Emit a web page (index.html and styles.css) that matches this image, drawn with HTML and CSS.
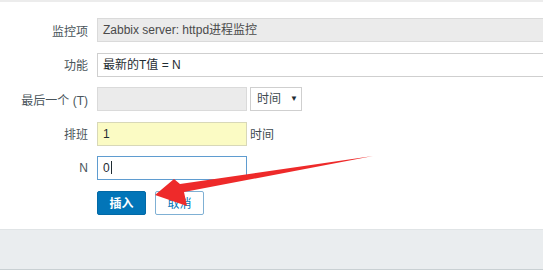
FILE: index.html
```html
<!DOCTYPE html>
<html lang="zh">
<head>
<meta charset="utf-8">
<title>功能</title>
<link rel="stylesheet" href="styles.css">
</head>
<body>
<div class="page">
  <form class="form">
    <div class="row">
      <label class="label">监控项</label>
      <div class="field"><div class="input input-wide input-readonly">Zabbix server: httpd进程监控</div></div>
    </div>
    <div class="row">
      <label class="label">功能</label>
      <div class="field"><div class="input input-wide">最新的T值 = N</div></div>
    </div>
    <div class="row">
      <label class="label">最后一个 (T)</label>
      <div class="field">
        <div class="input input-short input-readonly"></div>
        <div class="select">时间 <span class="caret">▼</span></div>
      </div>
    </div>
    <div class="row">
      <label class="label">排班</label>
      <div class="field">
        <div class="input input-short input-yellow">1</div>
        <span class="unit">时间</span>
      </div>
    </div>
    <div class="row">
      <label class="label">N</label>
      <div class="field"><div class="input input-short input-focus">0<span class="cursor"></span></div></div>
    </div>
    <div class="row">
      <span class="label"></span>
      <div class="field buttons">
        <button type="button" class="btn btn-primary">插入</button>
        <button type="button" class="btn btn-alt">取消</button>
      </div>
    </div>
  </form>
  <div class="footer"></div>
  <svg class="arrow" width="543" height="270" viewBox="0 0 543 270">
    <polygon points="155,195 174,179 180,184 373,156 184,192 187,206" fill="#ee2a2a"/>
  </svg>
</div>
</body>
</html>
```
FILE: styles.css
```css
html, body {
  margin: 0;
  padding: 0;
  background: #ffffff;
}
body {
  font-family: "Liberation Sans", Arial, "Noto Sans CJK SC", sans-serif;
  font-size: 12px;
  color: #1f2c33;
  overflow: hidden;
  width: 543px;
  height: 270px;
}
.page {
  position: relative;
  width: 543px;
  height: 270px;
  overflow: hidden;
}
.form {
  border-top: 2px solid #ececec;
  padding: 16px 0 14px 0;
  display: flex;
  flex-direction: column;
  gap: 10.5px;
}
.row {
  display: grid;
  grid-template-columns: 88px 1fr;
  column-gap: 9px;
  align-items: center;
  height: 24px;
}
.label {
  text-align: right;
  color: #4a555b;
  white-space: nowrap;
}
.field {
  display: flex;
  align-items: center;
  gap: 3px;
  min-width: 0;
}
.input {
  box-sizing: border-box;
  height: 24px;
  line-height: 22px;
  border: 1px solid #cfcfcf;
  background: #ffffff;
  padding: 0 5px;
  color: #1f2c33;
  white-space: nowrap;
  flex: none;
}
.input-wide {
  width: 470px;
}
.input-short {
  width: 150px;
}
.input-readonly {
  background: #ebebeb;
  color: #4a4a4a;
  border-color: #dadada;
}
.input-yellow {
  background: #fbfbc4;
  border-color: #d8d8b8;
}
.input-focus {
  border-color: #5f9cd0;
}
.cursor {
  display: inline-block;
  width: 1px;
  height: 13px;
  background: #1f2c33;
  vertical-align: -2px;
  margin-left: 1px;
}
.select {
  box-sizing: border-box;
  width: 52px;
  height: 24px;
  line-height: 22px;
  border: 1px solid #cfcfcf;
  padding: 0 0 0 6px;
  color: #3e4a50;
  display: flex;
  gap: 9px;
}
.caret {
  font-size: 8px;
  color: #1f2c33;
}
.unit {
  color: #3e4a50;
}
.buttons {
  gap: 9px;
}
.btn {
  box-sizing: border-box;
  height: 24px;
  width: 49px;
  font-family: inherit;
  font-size: 12px;
  border-radius: 2px;
  padding: 0;
  cursor: pointer;
}
.btn-primary {
  background: #0275b8;
  border: 1px solid #0269a6;
  color: #ffffff;
  font-weight: bold;
}
.btn-alt {
  background: #ffffff;
  border: 1px solid #7fb0d4;
  color: #0275b8;
}
.footer {
  height: 39px;
  background: #eaedef;
  border-top: 1px solid #e0e4e6;
  border-bottom: 1px solid #c9d0d3;
}
.arrow {
  position: absolute;
  left: 0;
  top: 0;
  pointer-events: none;
}
```
